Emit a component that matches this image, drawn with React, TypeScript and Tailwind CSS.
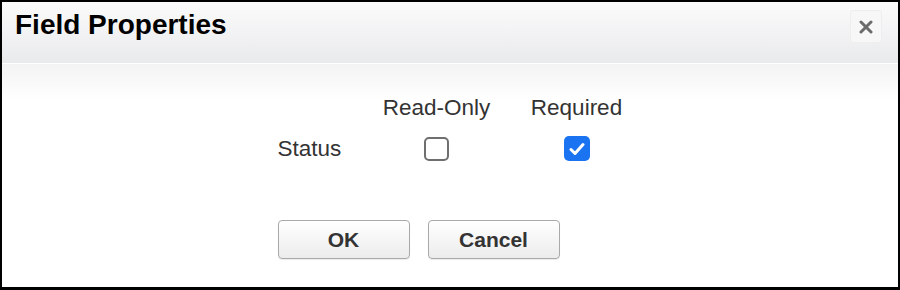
import React from 'react';

const App: React.FC = () => {
  return (
    <div className="w-[900px] h-[290px] flex flex-col border-2 border-b-[3px] border-black bg-white font-['Liberation_Sans',Arial,sans-serif] text-[#333]">
      {/* Header */}
      <div className="h-[62px] shrink-0 flex items-start justify-between bg-gradient-to-b from-[#fbfbfb] to-[#e9eaec] border-b border-white pl-[13px] pr-[16px]">
        <h1 className="pt-[7px] text-[28px] font-bold leading-[32px] text-black">Field Properties</h1>
        <button className="mt-[8px] w-[32px] h-[33px] flex items-center justify-center rounded-[3px] border border-[#eeeeee] bg-[#f7f7f7]">
          <svg width="14" height="14" viewBox="0 0 14 14">
            <path d="M2 2 L12 12 M12 2 L2 12" stroke="#6b6b6b" strokeWidth="3" strokeLinecap="round" />
          </svg>
        </button>
      </div>

      {/* Body */}
      <div className="flex-1 flex justify-center bg-gradient-to-b from-[#f3f3f4] via-white via-[16%] to-white pt-[31px]">
        <div className="flex flex-col">
          <div className="grid grid-cols-[65px_108px_92px] gap-x-10 gap-y-4 text-[22.5px] leading-[25px]">
            <div />
            <div className="text-center whitespace-nowrap">Read-Only</div>
            <div className="text-center whitespace-nowrap">Required</div>

            <div className="whitespace-nowrap">Status</div>
            <div className="flex items-center justify-center">
              <span className="block w-[25px] h-[24px] rounded-[5px] border-2 border-[#6f6f6f] bg-white" />
            </div>
            <div className="flex items-center justify-center pl-[1px]">
              <span className="flex items-center justify-center w-[26px] h-[25px] rounded-[5px] bg-[#1a73f0]">
                <svg width="16" height="14" viewBox="0 0 16 14">
                  <path d="M2 7.5 L6 11.5 L14 2.5" fill="none" stroke="white" strokeWidth="3" strokeLinecap="round" strokeLinejoin="round" />
                </svg>
              </span>
            </div>
          </div>

          <div className="flex gap-[18px] mt-[59px]">
            <button className="w-[132px] h-[39px] rounded-[4px] border border-[#a9a9a9] bg-gradient-to-b from-white to-[#ececec] text-[21px] font-bold text-[#333] shadow-[0_1px_1px_rgba(0,0,0,0.08)]">
              OK
            </button>
            <button className="w-[132px] h-[39px] rounded-[4px] border border-[#a9a9a9] bg-gradient-to-b from-white to-[#ececec] text-[21px] font-bold text-[#333] shadow-[0_1px_1px_rgba(0,0,0,0.08)]">
              Cancel
            </button>
          </div>
        </div>
      </div>
    </div>
  );
};

export default App;
